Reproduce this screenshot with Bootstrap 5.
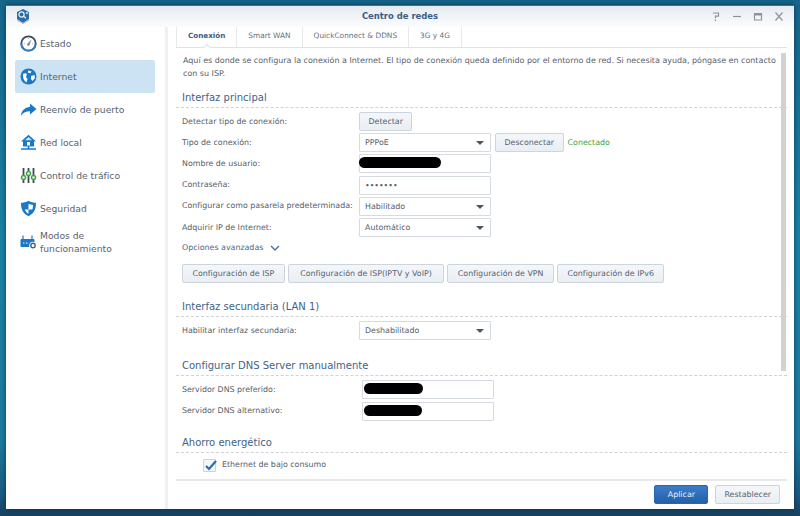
<!DOCTYPE html>
<html lang="es">
<head>
<meta charset="UTF-8">
<title>Centro de redes</title>
<link rel="stylesheet" href="https://cdn.jsdelivr.net/npm/bootstrap@5.3.0/dist/css/bootstrap.min.css">
<style>
html, body { height: 516px; overflow: hidden; }
body { background: linear-gradient(#16668c 0%, #1a82a6 45%, #1c7ba1 85%, #1a5a80 96%, #17405f 100%); font-family: "DejaVu Sans", Verdana, sans-serif; font-size: 7.9px; color: #56606a; padding: 5px 6px 7px 6px; }
.dsm-window { height: 504px; background: #fff; border-top: 1px solid #3c6ea5; box-shadow: 0 0 5px rgba(0,20,40,.6); position: relative; }
.dsm-title { height: 21px; background: linear-gradient(#e6ebf1, #fbfcfd); padding: 0 9px; position: relative; flex: none; }
.dsm-title-text { font-weight: 700; font-size: 8.45px; color: #3b5d84; }
.dsm-logo { position: absolute; left: 9px; top: 2px; }
.dsm-ctrls { position: absolute; right: 10px; top: 5px; gap: 11px; }
.dsm-body { height: 482px; }
.dsm-side { width: 162px; padding: 0 10px 0 9px; border-right: 3px solid #eef0f2; flex: none; }
.side-item { height: 33px; padding-left: 5px; gap: 3px; font-size: 9.2px; color: #59636e; border-radius: 2px; line-height: 13px; }
.side-item.on { background: #cce3f4; }
.side-ico { width: 17px; height: 17px; flex: none; }
.dsm-main { padding: 0 7px 0 8px; min-width: 0; position: relative; }
.dsm-tabs { height: 21px; border-bottom: 1px solid #dfe3e7; flex: none; }
.dsm-tab { height: 20px; padding: 0 11px; font-size: 7.4px; color: #66717c; border-right: 1px solid #e6e9ec; line-height: 17px; }
.dsm-tab.on { color: #3b5d84; font-weight: 700; font-size: 7.2px; border-left: 1px solid #e6e9ec; position: relative; }
.dsm-tab.on::after { content: ""; position: absolute; left: 50%; bottom: -4px; width: 6px; height: 6px; margin-left: -3px; background: #fff; border-left: 1px solid #dfe3e7; border-top: 1px solid #dfe3e7; transform: rotate(45deg); }
.dsm-scroll { flex: 1; min-height: 0; overflow: hidden; padding-top: 6px; }
.dsm-scrollbar { position: absolute; left: 613px; top: 26px; width: 5px; height: 318px; background: #d2d2d2; }
.dsm-intro { padding-left: 7px; line-height: 13px; margin-bottom: 11px; font-size: 7.98px; white-space: nowrap; }
.dsm-head { font-size: 10px; color: #3f6388; padding-left: 6px; border-bottom: 1px dashed #cfd3d7; height: 17px; line-height: 14px; }
.dsm-head-a { margin-top: 17px; }
.dsm-head-b { margin-top: 18px; }
.dsm-head-c { margin-top: 14px; }
.dsm-rows { padding: 3px 0 0 6px; }
.dsm-row { height: 21.2px; }
.dsm-label { width: 177px; flex: none; white-space: nowrap; }
.dsm-ctl { width: 132px; height: 19px; border: 1px solid #d5dbe1; background: #fff; padding: 0 5px; line-height: 17px; border-radius: 1px; position: relative; flex: none; }
.dsm-ctl.sel::after { content: ""; position: absolute; right: 6px; top: 7px; border: 4px solid transparent; border-top-color: #4d5660; border-bottom: 0; }
.dsm-ctl-wide { margin-left: 3px; }
.dsm-btn { height: 19px; padding: 0 9.5px; line-height: 17px; font-size: 7.9px; color: #566270; background: linear-gradient(#f4f7fa, #e9eef3); border: 1px solid #ccd5de; border-radius: 2px; flex: none; }
.dsm-btn-tight { padding: 0 8.5px; }
.dsm-btn-long { padding: 0 11.5px; }
.dsm-redact { position: absolute; top: 2px; height: 11px; background: #000; border-radius: 6px; }
.redact-user { left: -1px; width: 82px; }
.redact-dns1 { left: 1px; width: 59px; }
.redact-dns2 { left: 1px; width: 58px; }
.dsm-ok { color: #3fa63f; }
.dsm-more { color: #4a6a8c; height: 18px; gap: 7px; padding-top: 2px; }
.dsm-btnrow { gap: 3px; margin-top: 8px; }
.dsm-foot { height: 30px; border-top: 2px solid #e8ebee; padding: 4px 7px 0 0; gap: 7px; flex: none; }
.dsm-btn.prim { background: linear-gradient(#3c7cc6, #2460aa); color: #e8f0fa; border-color: #2a65ae; padding: 0 12.5px; }
.dsm-btn.dsm-btn-last { padding: 0 8px; }
.dsm-checkrow { padding: 6px 0 0 27px; gap: 6px; }
.dsm-check { width: 13px; height: 13px; border: 1px solid #ccd3da; border-radius: 1px; background: #f4f6f8; position: relative; flex: none; }
.dsm-check svg { position: absolute; left: 0; top: -2px; }
</style>
</head>
<body>
<div class="dsm-window d-flex flex-column">
  <div class="dsm-title d-flex align-items-center justify-content-center">
    <svg class="dsm-logo" width="16" height="16" viewBox="0 0 16 16"><path d="M8 1l6 3v7l-6 4-6-4V4z" fill="#2b6ba6"/><path d="M2 11l6 4 6-4v1.5L8 16l-6-3.5z" fill="#aab4be"/><circle cx="6.5" cy="6.5" r="2.6" fill="none" stroke="#e8f2fa" stroke-width="1.2"/><path d="M9 8.5l2 1.8" stroke="#e8f2fa" stroke-width="1.2"/><circle cx="12" cy="5" r="1.3" fill="#9fd0f2"/></svg>
    <span class="dsm-title-text">Centro de redes</span>
    <div class="dsm-ctrls d-flex align-items-center">
      <svg width="10" height="11" viewBox="0 0 10 11" fill="none" stroke="#8b949d" stroke-width="1.2"><path d="M2 2h5.500v3.200H4.500v2M4.500 8.500v1.500"/></svg>
      <svg width="10" height="11" viewBox="0 0 10 11" fill="none" stroke="#8b949d" stroke-width="1.2"><path d="M1 5.500h8"/></svg>
      <svg width="10" height="11" viewBox="0 0 10 11" fill="none" stroke="#8b949d" stroke-width="1.2"><path d="M1.500 2.500h7v6.500h-7z"/><path d="M1.500 3.500h7" stroke-width="2"/></svg>
      <svg width="10" height="11" viewBox="0 0 10 11" fill="none" stroke="#8b949d" stroke-width="1.2"><path d="M1.500 1.500l7 8M8.500 1.500l-7 8"/></svg>
    </div>
  </div>
  <div class="dsm-body d-flex">
    <div class="dsm-side">
      <div class="side-item d-flex align-items-center">
        <svg class="side-ico" viewBox="0 0 17 17"><circle cx="8.500" cy="8.500" r="7.200" fill="#fff" stroke="#3b4a58" stroke-width="1.800"/><path d="M1.300 8.500a7.200 7.200 0 0 0 14.400 0" fill="none" stroke="#2f7fc4" stroke-width="1.800"/><path d="M11.500 4.500L9.500 9.500 7.800 8.300z" fill="#7a8691"/><circle cx="8.400" cy="9.500" r="1.300" fill="#7a8691"/><path d="M8.500 3v1M4 8.500h1M13 8.500h-1" stroke="#9aa4ae" stroke-width=".8"/></svg>
        <span>Estado</span>
      </div>
      <div class="side-item on d-flex align-items-center">
        <svg class="side-ico" viewBox="0 0 17 17"><circle cx="8.500" cy="8.500" r="8" fill="#1a78c8"/><path d="M3 6c1.500-1 3-1 4 0L6 9l1.500 2-1 3.500C4 13 2.500 10 3 6zM8 2.500l3.500.8-1 2-2.500-.5zM11 8l3.500-1 .5 3-2.500 3-1.500-2z" fill="#fff"/></svg>
        <span>Internet</span>
      </div>
      <div class="side-item d-flex align-items-center">
        <svg class="side-ico" viewBox="0 0 17 17"><path d="M10 2.500l6.500 5.500-6.500 5.500v-3.200C6 10.300 3 11.500 .8 15c.6-5 3.700-8.500 9.200-9.300z" fill="#1a78c8"/></svg>
        <span>Reenvío de puerto</span>
      </div>
      <div class="side-item d-flex align-items-center">
        <svg class="side-ico" viewBox="0 0 17 17"><path d="M8.500 .8L16 7.500h-2v5H3v-5H1z" fill="#1a78c8"/><path d="M8.500 3l3.500 3.200H5z" fill="#cfe4f6"/><rect x="7" y="8" width="3" height="3.500" fill="#fff"/><path d="M1 15h15M8.500 12v3" stroke="#1a78c8" stroke-width="1.600"/></svg>
        <span>Red local</span>
      </div>
      <div class="side-item d-flex align-items-center">
        <svg class="side-ico" viewBox="0 0 17 17" fill="none"><path d="M3.500 1v15M8.500 1v15M13.500 1v15" stroke="#3d4a56" stroke-width="1.800"/><circle cx="3.500" cy="10.500" r="2" fill="#fff" stroke="#3fa33f" stroke-width="1.500"/><circle cx="8.500" cy="6.500" r="2" fill="#fff" stroke="#3fa33f" stroke-width="1.500"/><circle cx="13.500" cy="10.500" r="2" fill="#fff" stroke="#3fa33f" stroke-width="1.500"/></svg>
        <span>Control de tráfico</span>
      </div>
      <div class="side-item d-flex align-items-center">
        <svg class="side-ico" viewBox="0 0 17 17"><path d="M8.500 .8c2.500 1.500 5 2 7.500 2 0 6-1.500 10.500-7.500 13.500C2.500 13.300 1 8.800 1 2.800c2.500 0 5-.5 7.500-2z" fill="#1a78c8"/><path d="M8.500 4l4.500 1c0 2-.2 3.300-.7 4.500H8.500zM8.500 9.500v4.300C6.700 12.700 5.500 11.300 4.800 9.500z" fill="#fff"/></svg>
        <span>Seguridad</span>
      </div>
      <div class="side-item d-flex align-items-center">
        <svg class="side-ico" viewBox="0 0 17 17"><path d="M3 2.500v4M12 2.500v4" stroke="#1a78c8" stroke-width="1.200"/><rect x="0.500" y="6" width="14" height="8" rx="1" fill="#1a78c8"/><path d="M3 10h1.500M6 10h1.500" stroke="#fff" stroke-width="1"/><circle cx="13" cy="12.500" r="3.800" fill="#fff"/><circle cx="13" cy="12.500" r="2.200" fill="none" stroke="#55606b" stroke-width="1.400"/></svg>
        <span>Modos de<br>funcionamiento</span>
      </div>
    </div>
    <div class="dsm-main flex-grow-1 d-flex flex-column">
      <div class="dsm-tabs d-flex">
        <div class="dsm-tab on">Conexión</div>
        <div class="dsm-tab">Smart WAN</div>
        <div class="dsm-tab">QuickConnect &amp; DDNS</div>
        <div class="dsm-tab">3G y 4G</div>
      </div>
      <div class="dsm-scroll">
        <div class="dsm-intro">Aquí es donde se configura la conexión a Internet. El tipo de conexión queda definido por el entorno de red. Si necesita ayuda, póngase en contacto<br>con su ISP.</div>

        <div class="dsm-head">Interfaz principal</div>
        <div class="dsm-rows">
          <div class="dsm-row d-flex align-items-center"><div class="dsm-label">Detectar tipo de conexión:</div><div class="dsm-btn dsm-btn-tight">Detectar</div></div>
          <div class="dsm-row d-flex align-items-center"><div class="dsm-label">Tipo de conexión:</div><div class="dsm-ctl sel">PPPoE</div><div class="dsm-btn dsm-btn-tight ms-1">Desconectar</div><div class="dsm-ok ms-1">Conectado</div></div>
          <div class="dsm-row d-flex align-items-center"><div class="dsm-label">Nombre de usuario:</div><div class="dsm-ctl"><span class="dsm-redact redact-user"></span></div></div>
          <div class="dsm-row d-flex align-items-center"><div class="dsm-label">Contraseña:</div><div class="dsm-ctl">•••••••</div></div>
          <div class="dsm-row d-flex align-items-center"><div class="dsm-label">Configurar como pasarela predeterminada:</div><div class="dsm-ctl sel">Habilitado</div></div>
          <div class="dsm-row d-flex align-items-center"><div class="dsm-label">Adquirir IP de Internet:</div><div class="dsm-ctl sel">Automático</div></div>
          <div class="dsm-more d-flex align-items-center">Opciones avanzadas <svg width="10" height="6" viewBox="0 0 10 6" fill="none" stroke="#3f6f9f" stroke-width="1.300"><path d="M1 1l4 4 4-4"/></svg></div>
          <div class="d-flex dsm-btnrow">
            <div class="dsm-btn">Configuración de ISP</div>
            <div class="dsm-btn dsm-btn-long">Configuración de ISP(IPTV y VoIP)</div>
            <div class="dsm-btn">Configuración de VPN</div>
            <div class="dsm-btn">Configuración de IPv6</div>
          </div>
        </div>

        <div class="dsm-head dsm-head-a">Interfaz secundaria (LAN 1)</div>
        <div class="dsm-rows">
          <div class="dsm-row d-flex align-items-center"><div class="dsm-label">Habilitar interfaz secundaria:</div><div class="dsm-ctl sel">Deshabilitado</div></div>
        </div>

        <div class="dsm-head dsm-head-b">Configurar DNS Server manualmente</div>
        <div class="dsm-rows">
          <div class="dsm-row d-flex align-items-center"><div class="dsm-label">Servidor DNS preferido:</div><div class="dsm-ctl dsm-ctl-wide"><span class="dsm-redact redact-dns1"></span></div></div>
          <div class="dsm-row d-flex align-items-center"><div class="dsm-label">Servidor DNS alternativo:</div><div class="dsm-ctl dsm-ctl-wide"><span class="dsm-redact redact-dns2"></span></div></div>
        </div>

        <div class="dsm-head dsm-head-c">Ahorro energético</div>
        <div class="d-flex align-items-center dsm-checkrow">
          <span class="dsm-check"><svg width="14" height="14" viewBox="0 0 14 14" fill="none" stroke="#2a6db5" stroke-width="2.200"><path d="M2 8l3 3 7-8"/></svg></span>
          <span>Ethernet de bajo consumo</span>
        </div>
      </div>
      <div class="dsm-foot d-flex justify-content-end">
        <div class="dsm-btn prim">Aplicar</div>
        <div class="dsm-btn dsm-btn-last">Restablecer</div>
      </div>
      <div class="dsm-scrollbar"></div>
    </div>
  </div>
</div>
</body>
</html>
